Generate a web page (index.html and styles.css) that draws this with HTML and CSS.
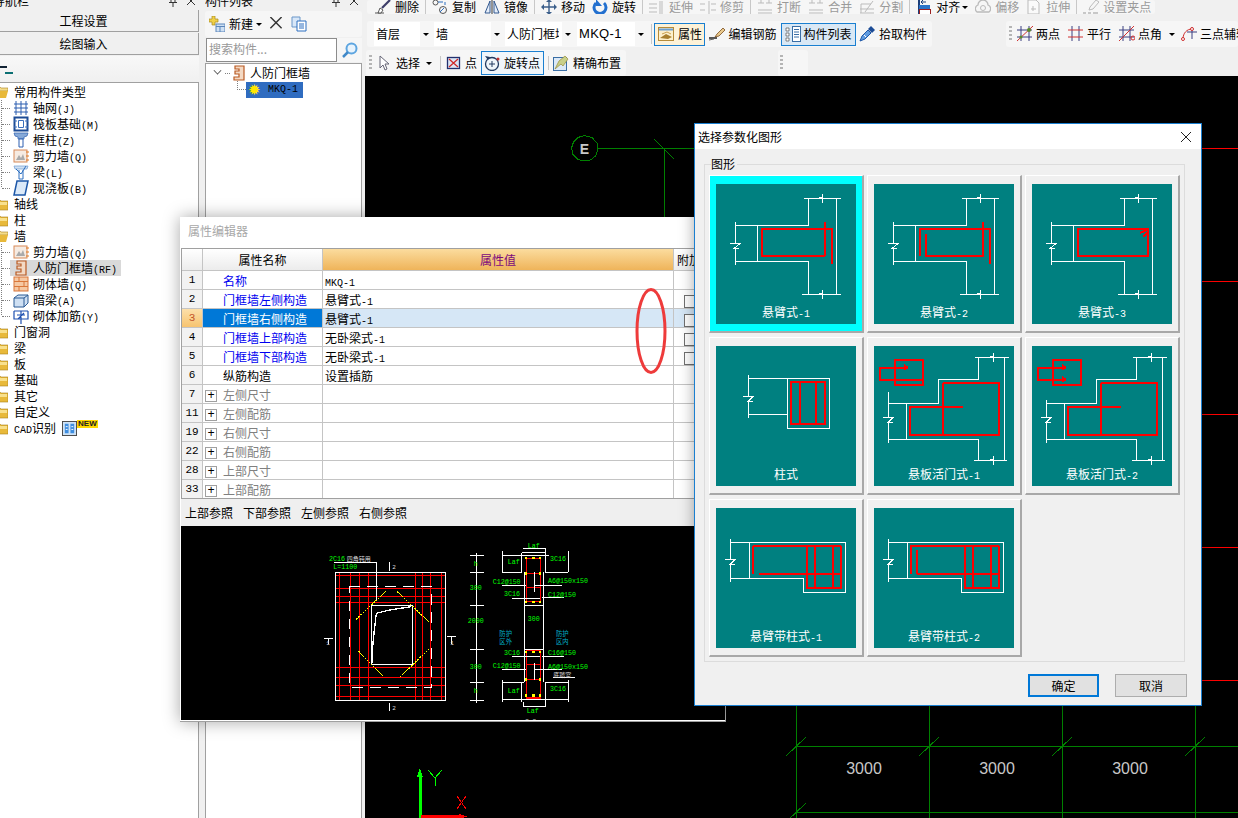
FILE: index.html
```html
<!DOCTYPE html>
<html lang="zh">
<head>
<meta charset="utf-8">
<title>属性编辑器</title>
<link rel="stylesheet" href="styles.css">
</head>
<body>
<svg class="defs" xmlns="http://www.w3.org/2000/svg">
  <symbol id="folder" viewBox="0 0 13 13"><path d="M0 2h5l1 1h7v9H0z" fill="#e8b93a" stroke="#a97f1c" stroke-width=".6"/><rect x="1" y="4" width="11" height="3" fill="#f8e08c"/></symbol>
  <symbol id="folderopen" viewBox="0 0 13 13"><path d="M0 1h5l1 1h7v3H3L0 12z" fill="#f4dc8a" stroke="#a97f1c" stroke-width=".6"/><path d="M3 5h10l-2 7H0z" fill="#e8b93a"/></symbol>
  <symbol id="pin" viewBox="0 0 10 10"><path d="M3 0v5M7 0v5M1 5.500h8M5 5v5" stroke="#333" fill="none"/></symbol>
  <symbol id="x" viewBox="0 0 10 10"><path d="M1 0l8 8M9 0l-8 8" stroke="#333" fill="none"/></symbol>
  <symbol id="grid" viewBox="0 0 16 16"><path d="M3 1v14M8 1v14M13 1v14M1 4h14M1 8h14M1 12h14" stroke="#2c5fb0" fill="none"/></symbol>
  <symbol id="raft" viewBox="0 0 16 16"><path d="M1.500 1.500h13v13h-13z" fill="none" stroke="#1d4c96" stroke-width="2"/><path d="M5.500 4.500h5v7h-5zM1 5h3M1 11h3M12 5h3M12 11h3" fill="none" stroke="#3a6fbb"/></symbol>
  <symbol id="col" viewBox="0 0 16 16"><path d="M1 1h14l-1 3-3 1v2H5V5L2 4z" fill="#86a9d8" stroke="#2c5fb0" stroke-width=".7"/><path d="M6 7h4v8H6z" fill="#fff" stroke="#2c5fb0"/></symbol>
  <symbol id="shear" viewBox="0 0 16 16"><rect x="1" y="2" width="13" height="12" fill="#f6ebe2" stroke="#d78a58"/><path d="M3 12l3-5 2 3 2-4 2 6z" fill="#aaa"/><path d="M13 4h3M13 8h3M13 12h3" stroke="#e07b22"/></symbol>
  <symbol id="beam" viewBox="0 0 16 16"><path d="M1 2h14l-1 3H2z" fill="#cfe0f3" stroke="#6f9bd0" stroke-width=".7"/><path d="M3 5l5 5 5-8M6 6v9h4V6" fill="none" stroke="#2c6fc0"/></symbol>
  <symbol id="slab" viewBox="0 0 16 16"><path d="M4 1h11l-3 14H1z" fill="#dbe9f8" stroke="#1d57a8" stroke-width="1.500"/></symbol>
  <symbol id="mkq" viewBox="0 0 16 16"><path d="M4 1h9v14H3v-3h5V9H4V6h4V4H4z" fill="#f3d9c4" stroke="#b95a23" stroke-width="1.200"/></symbol>
  <symbol id="brick" viewBox="0 0 16 16"><rect x="1" y="1" width="14" height="14" fill="#f5c8a3" stroke="#d9773a"/><path d="M1 5.500h14M1 10.500h14M6 1v4M11 5.500v5M6 10.500V15" stroke="#d9773a" fill="none"/></symbol>
  <symbol id="dbeam" viewBox="0 0 16 16"><path d="M1 6l4-3h10v8l-4 4H1z" fill="#cfe0f3" stroke="#2b5a94"/><path d="M1 6h10v9M11 6l4-3" fill="none" stroke="#2b5a94"/></symbol>
  <symbol id="rein" viewBox="0 0 16 16"><path d="M1 3h14M1 3v8h14V3M8 3v13M4 7h8M11 5l-6 6" fill="none" stroke="#1d4fb0" stroke-width="1.200"/></symbol>
  <symbol id="cad" viewBox="0 0 16 16"><rect x=".5" y=".5" width="15" height="15" fill="#cfe3f7" stroke="#444"/><path d="M3 3h4v10H3zM9 3h4v10H9z" fill="#3f8ee0"/><path d="M4 6h2M4 9h2M10 6h2M10 9h2" stroke="#fff"/></symbol>
  <symbol id="plusnew" viewBox="0 0 16 16"><path d="M3 0h3v3h3v3H6v3H3V6H0V3h3z" fill="#f0d048" stroke="#a88a20" stroke-width=".7"/><rect x="7" y="8" width="9" height="8" fill="#cfe0f3" stroke="#5b86bb"/><path d="M7 10.500h9M11 11v5" stroke="#5b86bb"/></symbol>
  <symbol id="copydoc" viewBox="0 0 16 16"><path d="M1 1h8v10H1z" fill="#d8e7f8" stroke="#6b97c9"/><path d="M6 5h9v10H6z" fill="#fff" stroke="#2d6fc0"/><path d="M8 8h5M8 10h5M8 12h5" stroke="#2d6fc0"/></symbol>
  <symbol id="search" viewBox="0 0 16 16"><circle cx="9.500" cy="6.500" r="5" fill="#e8f3fc" stroke="#5da5e0" stroke-width="2"/><path d="M6 10l-5 5" stroke="#4189c8" stroke-width="2.500"/></symbol>
  <symbol id="t-del" viewBox="0 0 16 16"><path d="M0 14h9" stroke="#555"/><path d="M7 9l8-8" stroke="#3d3d68" stroke-width="2.200"/><path d="M3 14l2-5 3 2-2 3z" fill="#fff" stroke="#333" stroke-width=".8"/></symbol>
  <symbol id="t-copy" viewBox="0 0 16 16"><circle cx="3.500" cy="3.500" r="2.500" fill="none" stroke="#555"/><circle cx="11" cy="11" r="3.500" fill="none" stroke="#555"/><path d="M6 3h5M13 3v3M8 13l4-4" stroke="#2d6fc0" fill="none"/></symbol>
  <symbol id="t-mir" viewBox="0 0 16 16"><path d="M6 2L1 14h5zM10 2l5 12h-5z" fill="#e5eefa" stroke="#33598f"/><path d="M8 0v16" stroke="#333"/></symbol>
  <symbol id="t-move" viewBox="0 0 16 16"><path d="M8 2v12M2 8h12" stroke="#3b5e8a" stroke-width="1.400"/><path d="M8 0l3 3H5zM8 16l3-3H5zM0 8l3-3v6zM16 8l-3-3v6z" fill="#3b5e8a"/></symbol>
  <symbol id="t-rot" viewBox="0 0 16 16"><path d="M4 4a6 6 0 1 0 8 0" fill="none" stroke="#2370cf" stroke-width="3"/><path d="M4 0v7h6z" fill="#2370cf"/></symbol>
  <symbol id="t-ext" viewBox="0 0 16 16"><path d="M0 5h8M0 9h8M0 13h8M11 2v13M13 2v13" stroke="#bbb" fill="none"/></symbol>
  <symbol id="t-trim" viewBox="0 0 16 16"><path d="M0 5h5M0 11h5M9 2v13M11 5h5M11 11h5" stroke="#bbb" fill="none"/></symbol>
  <symbol id="t-brk" viewBox="0 0 16 16"><path d="M1 4h6M9 4h6M1 11h14M1 14h14M4 1v3M12 1v3" stroke="#bbb" fill="none"/></symbol>
  <symbol id="t-split" viewBox="0 0 16 16"><path d="M1 14h14M1 10h14M2 5l10 0M2 14V5M14 2L6 13" stroke="#bbb" fill="none"/></symbol>
  <symbol id="t-align" viewBox="0 0 16 16"><path d="M3 0v16" stroke="#1d3f7a" stroke-width="2"/><rect x="3" y="6" width="11" height="4" fill="#2a73c8"/><rect x="3.500" y="10.500" width="11" height="5" fill="#fff" stroke="#9c2020"/><path d="M10 3H5M7 1L5 3l2 2" stroke="#1d3f7a" fill="none"/></symbol>
  <symbol id="t-off" viewBox="0 0 16 16"><path d="M2 13a4 4 0 0 1 1-7 5 5 0 0 1 10 0 4 4 0 0 1 1 7z" fill="none" stroke="#bbb" stroke-width="1.300"/><circle cx="8" cy="9" r="2.500" fill="none" stroke="#bbb"/></symbol>
  <symbol id="t-str" viewBox="0 0 16 16"><path d="M2 1h8l3 3v11H2z" fill="#fafafa" stroke="#bbb"/><path d="M7 7v5M5 10h5" stroke="#bbb"/></symbol>
  <symbol id="t-grip" viewBox="0 0 16 16"><path d="M0 14h3M5 14h3M10 14h5" stroke="#999"/><path d="M6 11l1-3 6-7 3 2-6 7z" fill="none" stroke="#bbb"/></symbol>
  <symbol id="t-attr" viewBox="0 0 16 16"><rect x=".5" y="1.500" width="15" height="13" fill="#fdf0cc" stroke="#b58b3a"/><path d="M1 3.500h14" stroke="#6fa0d0" stroke-width="2"/><path d="M2 12l6-4 6 3-4 2z" fill="#a88030"/><path d="M4 8l5-2 4 2" stroke="#c9a050" fill="none"/></symbol>
  <symbol id="t-edit" viewBox="0 0 16 16"><path d="M0 12h8" stroke="#222" stroke-width="1.500"/><path d="M6 11l2-3 6-6 2 2-6 6z" fill="#e9c98c" stroke="#7a4d20" stroke-width=".8"/><path d="M0 14l5-1" stroke="#666"/></symbol>
  <symbol id="t-list" viewBox="0 0 16 16"><rect x="7.500" y=".5" width="8" height="15" fill="#fff" stroke="#3a6ea5"/><path d="M9 3.500h5M9 6h5M9 8.500h5M9 11h5" stroke="#3a6ea5"/><path d="M1 2h3v3H1zM1 7h3v3H1zM1 12h3v3H1z" fill="#fff" stroke="#555" stroke-width=".7"/></symbol>
  <symbol id="t-pick" viewBox="0 0 16 16"><path d="M1 15l2-5 6-6 3 3-6 6z" fill="#5f9adf" stroke="#1d57a8"/><path d="M9 3l3-3 4 4-3 3z" fill="#1d4c96"/><path d="M5 9l2 2" stroke="#fff"/></symbol>
  <symbol id="t-two" viewBox="0 0 16 16"><path d="M4 0v15M12 0v15M0 4h15M0 11h15" stroke="#3a3f80" fill="none"/><path d="M0 15L16 0" stroke="#d03030"/><circle cx="12" cy="4" r="2" fill="#5b8a28"/><circle cx="4" cy="11" r="1.500" fill="#5b8a28"/></symbol>
  <symbol id="t-par" viewBox="0 0 16 16"><path d="M4 0v15M11 0v15" stroke="#3a3f80" fill="none"/><path d="M0 4h15M0 11h15" stroke="#d03030" fill="none"/></symbol>
  <symbol id="t-ang" viewBox="0 0 16 16"><path d="M4 0v15M11 0v15M0 4h15M0 11h15" stroke="#3a3f80" fill="none"/><path d="M0 15L15 0" stroke="#d03030"/><circle cx="14" cy="12" r="2" fill="none" stroke="#d03030"/></symbol>
  <symbol id="t-three" viewBox="0 0 16 16"><path d="M11 1v12M6 6h10" stroke="#3a3f80" fill="none"/><path d="M2 13C2 7 6 3 11 3" fill="none" stroke="#d03030"/><circle cx="2" cy="13" r="1.500" fill="#fff" stroke="#d03030"/><circle cx="11" cy="3" r="1.500" fill="#fff" stroke="#d03030"/></symbol>
  <symbol id="t-sel" viewBox="0 0 16 16"><path d="M4 1v12l3-3 2 5 2-1-2-5h4z" fill="#fff" stroke="#667"/></symbol>
  <symbol id="t-pt" viewBox="0 0 16 16"><rect x="1.500" y="2.500" width="12" height="11" fill="#dbe6f5" stroke="#22306f" stroke-width="1.300"/><path d="M3 4l9 8M12 4l-9 8" stroke="#d02828" stroke-width="1.300"/></symbol>
  <symbol id="t-rpt" viewBox="0 0 16 16"><circle cx="8" cy="9" r="6.500" fill="none" stroke="#223a60" stroke-width="1.300"/><path d="M5 9h6M8 6v6" stroke="#223a60"/><path d="M1 1l3 4 2-3z" fill="#223a60"/><circle cx="14" cy="4" r="1.500" fill="#c03030"/></symbol>
  <symbol id="t-prec" viewBox="0 0 16 16"><rect x=".5" y="2.500" width="13" height="13" fill="#dce9f7" stroke="#3a6ea5"/><path d="M2 14l6-5 2 2 5-7-3-3-6 5z" fill="#c9d08a" stroke="#9a8d38" stroke-width=".7"/></symbol>
  <symbol id="tee" viewBox="0 0 140 140"><path d="M19.500 38v21M19.500 64v17M19.500 41.500h73v-27M88 14.500h37M120.500 14.500v96M86 110.500h39M92.500 110.500v-33h-73M41.500 41.500v36M14 59.500h10l-6 5h5M106.500 10v9M102 14.500l5-2M106.500 106v9M102 110.500l5-2" fill="none" stroke="#fff"/></symbol>
  <symbol id="slabt" viewBox="0 0 140 140"><path d="M101 11.500h34M130.500 11.500v103M104.500 11.500v22h-40v24h-50M14.500 93.500h90v21M100 114.500h33M32.500 57.500v36M9 71.500h10l-5 5h5M119.500 7v9M115 11.500l5-2M119.500 110v9M115 114.500l5-2" fill="none" stroke="#fff"/><path d="M69 37h56v52H36V61h53M69 37v52" fill="none" stroke="#f00" stroke-width="2"/></symbol>
  <symbol id="cant" viewBox="0 0 140 140"><path d="M14.500 31v20M14.500 56v18M14.500 34.500h115v50h-42v-14h-73M33.500 34.500v36M9 51.500h10l-5 5h5" fill="none" stroke="#fff"/><path d="M91 38v42h34V38M99 38v42M117 38v42M43 66h82" fill="none" stroke="#f00" stroke-width="2"/></symbol>
</svg>

<div class="app">
  <aside class="nav">
    <div class="cliptitle"><span class="cliptext">模块导航栏</span><span class="titleicons"><svg class="mini"><use href="#pin"/></svg><svg class="mini"><use href="#x"/></svg></span></div>
    <button class="navbtn">工程设置</button>
    <button class="navbtn">绘图输入</button>
    <div class="navbar"><span class="teal-a"></span><span class="teal-b"></span></div>
    <ul class="tree">
      <li class="folder"><svg class="fi"><use href="#folderopen"/></svg>常用构件类型</li>
      <li class="group"><ul>
        <li class="leaf"><span class="dots"></span><span class="node"><svg class="ic"><use href="#grid"/></svg><span>轴网<i>(J)</i></span></span></li>
        <li class="leaf"><span class="dots"></span><span class="node"><svg class="ic"><use href="#raft"/></svg><span>筏板基础<i>(M)</i></span></span></li>
        <li class="leaf"><span class="dots"></span><span class="node"><svg class="ic"><use href="#col"/></svg><span>框柱<i>(Z)</i></span></span></li>
        <li class="leaf"><span class="dots"></span><span class="node"><svg class="ic"><use href="#shear"/></svg><span>剪力墙<i>(Q)</i></span></span></li>
        <li class="leaf"><span class="dots"></span><span class="node"><svg class="ic"><use href="#beam"/></svg><span>梁<i>(L)</i></span></span></li>
        <li class="leaf"><span class="dots"></span><span class="node"><svg class="ic"><use href="#slab"/></svg><span>现浇板<i>(B)</i></span></span></li>
      </ul></li>
      <li class="folder"><svg class="fi"><use href="#folder"/></svg>轴线</li>
      <li class="folder"><svg class="fi"><use href="#folder"/></svg>柱</li>
      <li class="folder"><svg class="fi"><use href="#folderopen"/></svg>墙</li>
      <li class="group"><ul>
        <li class="leaf"><span class="dots"></span><span class="node"><svg class="ic"><use href="#shear"/></svg><span>剪力墙<i>(Q)</i></span></span></li>
        <li class="leaf"><span class="dots"></span><span class="node cur"><svg class="ic"><use href="#mkq"/></svg><span>人防门框墙<i>(RF)</i></span></span></li>
        <li class="leaf"><span class="dots"></span><span class="node"><svg class="ic"><use href="#brick"/></svg><span>砌体墙<i>(Q)</i></span></span></li>
        <li class="leaf"><span class="dots"></span><span class="node"><svg class="ic"><use href="#dbeam"/></svg><span>暗梁<i>(A)</i></span></span></li>
        <li class="leaf"><span class="dots"></span><span class="node"><svg class="ic"><use href="#rein"/></svg><span>砌体加筋<i>(Y)</i></span></span></li>
      </ul></li>
      <li class="folder"><svg class="fi"><use href="#folder"/></svg>门窗洞</li>
      <li class="folder"><svg class="fi"><use href="#folder"/></svg>梁</li>
      <li class="folder"><svg class="fi"><use href="#folder"/></svg>板</li>
      <li class="folder"><svg class="fi"><use href="#folder"/></svg>基础</li>
      <li class="folder"><svg class="fi"><use href="#folder"/></svg>其它</li>
      <li class="folder"><svg class="fi"><use href="#folder"/></svg>自定义</li>
      <li class="folder"><svg class="fi"><use href="#folder"/></svg><span><i>CAD</i>识别</span><svg class="ic cadic"><use href="#cad"/></svg><b class="newtag">NEW</b></li>
    </ul>
  </aside>

  <section class="list">
    <div class="cliptitle list-title"><span class="cliptext">构件列表</span><span class="titleicons"><svg class="mini"><use href="#pin"/></svg><svg class="mini"><use href="#x"/></svg></span></div>
    <div class="listbar">
      <svg class="ic"><use href="#plusnew"/></svg><span class="newlbl">新建</span><span class="caret"></span>
      <svg class="bigx"><use href="#x"/></svg>
      <svg class="ic"><use href="#copydoc"/></svg>
    </div>
    <div class="searchrow"><span class="searchbox">搜索构件...</span><span class="searchbtn"><svg class="ic"><use href="#search"/></svg></span></div>
    <div class="listtree">
      <div class="ltroot"><span class="chev"></span><span class="ltdots"></span><svg class="ic ltic"><use href="#mkq"/></svg>人防门框墙</div>
      <div class="ltchild"><span class="ltelbow"></span><span class="ltsel"><span class="gear">✹</span><i>MKQ-1</i></span></div>
    </div>
  </section>

  <main class="work">
    <div class="bars">
      <div class="tbrow row1">
        <div class="tb tb1">
          <span class="ti"><svg class="ic"><use href="#t-del"/></svg>删除</span><span class="sep"></span>
          <span class="ti"><svg class="ic"><use href="#t-copy"/></svg>复制</span>
          <span class="ti mirror"><svg class="ic"><use href="#t-mir"/></svg>镜像</span><span class="sep"></span>
          <span class="ti"><svg class="ic"><use href="#t-move"/></svg>移动</span>
          <span class="ti"><svg class="ic"><use href="#t-rot"/></svg>旋转</span><span class="sep"></span>
          <span class="ti off"><svg class="ic"><use href="#t-ext"/></svg>延伸</span>
          <span class="ti off"><svg class="ic"><use href="#t-trim"/></svg>修剪</span><span class="sep"></span>
          <span class="ti off"><svg class="ic"><use href="#t-brk"/></svg>打断</span>
          <span class="ti off"><svg class="ic"><use href="#t-brk"/></svg>合并</span>
          <span class="ti off"><svg class="ic"><use href="#t-split"/></svg>分割</span><span class="sep"></span>
          <span class="ti"><svg class="ic"><use href="#t-align"/></svg>对齐<span class="caret inl"></span></span>
          <span class="ti off"><svg class="ic"><use href="#t-off"/></svg>偏移</span>
          <span class="ti off"><svg class="ic"><use href="#t-str"/></svg>拉伸</span><span class="sep"></span>
          <span class="ti off"><svg class="ic"><use href="#t-grip"/></svg>设置夹点</span>
        </div>
      </div>
      <div class="tbrow row2">
        <div class="tb tb2">
          <span class="combo w58"><span class="ctext">首层</span><span class="cbtn"><span class="caret"></span></span></span>
          <span class="combo w69"><span class="ctext">墙</span><span class="cbtn"><span class="caret"></span></span></span>
          <span class="combo w69 g3"><span class="ctext">人防门框墙</span><span class="cbtn"><span class="caret"></span></span></span>
          <span class="combo w70 g3"><span class="ctext latin">MKQ-1</span><span class="cbtn"><span class="caret"></span></span></span>
          <span class="sep s2"></span>
          <span class="tbtn amber"><svg class="ic"><use href="#t-attr"/></svg>属性</span>
          <span class="ti t2"><svg class="ic"><use href="#t-edit"/></svg>编辑钢筋</span>
          <span class="tbtn blue"><svg class="ic"><use href="#t-list"/></svg>构件列表</span>
          <span class="ti t2"><svg class="ic"><use href="#t-pick"/></svg>拾取构件</span>
        </div>
        <div class="tb tb3">
          <span class="grip"></span>
          <span class="ti t3"><svg class="ic"><use href="#t-two"/></svg>两点</span>
          <span class="ti t3"><svg class="ic"><use href="#t-par"/></svg>平行</span>
          <span class="ti t3"><svg class="ic"><use href="#t-ang"/></svg>点角<span class="caret car3"></span></span>
          <span class="ti t3"><svg class="ic"><use href="#t-three"/></svg>三点辅轴</span>
        </div>
      </div>
      <div class="tbrow row3">
        <div class="tb tb4">
          <span class="grip"></span>
          <span class="ti t4a"><svg class="ic"><use href="#t-sel"/></svg>选择<span class="caret car4"></span></span><span class="sep s3"></span>
          <span class="ti t4b"><svg class="ic"><use href="#t-pt"/></svg>点</span>
          <span class="tbtn rot"><svg class="ic"><use href="#t-rpt"/></svg>旋转点</span><span class="sep s4"></span>
          <span class="ti t4c"><svg class="ic"><use href="#t-prec"/></svg>精确布置</span>
        </div>
        <div class="tb tb5"><span class="grip"></span></div>
      </div>
    </div>
    <svg class="canvas" viewBox="365 76 873 742" xmlns="http://www.w3.org/2000/svg">
      <g fill="none" stroke="#008000">
        <path d="M598 148.500h100M664.500 148v75M654 139l20 20"/>
        <polygon points="584.500,135.500 592,137.500 597,143 598,149 596,155.500 590.500,160 584,161 578,159.500 573,154.500 571.500,148 573.500,142 578,137.500"/>
        <path d="M796.500 700v118M929.500 700v118M1062.500 700v118M1195.500 700v118M796 746.500h442M796 812.500h442"/>
        <path d="M786 756l20-19M919 756l20-19M1052 756l20-19M1185 756l20-19M786 822l20-19"/>
      </g>
      <path d="M1190 148.500h48M1190 281.500h48M1190 414.500h48M1190 547.500h48M1190 680.500h48" stroke="#f00"/>
      <text class="gridlabel e" x="584.500" y="154" text-anchor="middle">E</text>
      <text class="gridlabel" x="864" y="774" text-anchor="middle">3000</text>
      <text class="gridlabel" x="997" y="774" text-anchor="middle">3000</text>
      <text class="gridlabel" x="1130" y="774" text-anchor="middle">3000</text>
      <path d="M420 818v-42" stroke="#0f0" stroke-width="3"/><path d="M420 768l3 9h-6z" fill="#0f0"/>
      <path d="M428 768l7 8 7-8M435 776v8" stroke="#0f0" fill="none" transform="translate(0 2)"/>
      <path d="M421 816.500h42" stroke="#f00" stroke-width="3"/><path d="M468 817l-9-3v4z" fill="#f00"/>
      <path d="M457 796l9 13M466 796l-9 13" stroke="#f00"/>
    </svg>
  </main>
</div>

<div class="prop">
  <div class="proptitle">属性编辑器</div>
  <div class="gridwrap">
    <table class="ptable">
      <colgroup><col class="c1"><col class="c2"><col class="c3"><col class="c4"></colgroup>
      <thead><tr><th></th><th>属性名称</th><th class="hval">属性值</th><th class="hatt">附加</th></tr></thead>
      <tbody>
        <tr><td class="idx">1</td><td class="nm link">名称</td><td class="val"><i>MKQ-1</i></td><td></td></tr>
        <tr><td class="idx">2</td><td class="nm link">门框墙左侧构造</td><td class="val">悬臂式<i>-1</i></td><td><span class="chk"></span></td></tr>
        <tr class="cur"><td class="idx">3</td><td class="nm">门框墙右侧构造</td><td class="val">悬臂式<i>-1</i></td><td><span class="chk"></span></td></tr>
        <tr><td class="idx">4</td><td class="nm link">门框墙上部构造</td><td class="val">无卧梁式<i>-1</i></td><td><span class="chk"></span></td></tr>
        <tr><td class="idx">5</td><td class="nm link">门框墙下部构造</td><td class="val">无卧梁式<i>-1</i></td><td><span class="chk"></span></td></tr>
        <tr><td class="idx">6</td><td class="nm">纵筋构造</td><td class="val">设置插筋</td><td></td></tr>
        <tr><td class="idx">7</td><td class="gp"><span class="plus">+</span>左侧尺寸</td><td></td><td></td></tr>
        <tr><td class="idx">11</td><td class="gp"><span class="plus">+</span>左侧配筋</td><td></td><td></td></tr>
        <tr><td class="idx">19</td><td class="gp"><span class="plus">+</span>右侧尺寸</td><td></td><td></td></tr>
        <tr><td class="idx">22</td><td class="gp"><span class="plus">+</span>右侧配筋</td><td></td><td></td></tr>
        <tr><td class="idx">28</td><td class="gp"><span class="plus">+</span>上部尺寸</td><td></td><td></td></tr>
        <tr><td class="idx">33</td><td class="gp"><span class="plus">+</span>上部配筋</td><td></td><td></td></tr>
      </tbody>
    </table>
    <svg class="mark" viewBox="0 0 34 90"><ellipse cx="17" cy="45" rx="14" ry="41.500" fill="none" stroke="#ee3b3b" stroke-width="3"/></svg>
  </div>
  <div class="tabs"><span>上部参照</span><span>下部参照</span><span>左侧参照</span><span>右侧参照</span></div>
  <svg class="preview" viewBox="-357 -12 1632 582" xmlns="http://www.w3.org/2000/svg">
    <g fill="none" stroke="#f00" stroke-width="3">
      <path d="M107 135h330M107 175h330M107 199h330M107 217h330M107 412h330M107 441h330M107 465h330M107 500h330"/>
      <path d="M118 127v384M151 127v384M177 127v384M205 127v384M347 127v384M367 127v384M391 127v384M423 127v384M435 127v384"/>
      <path d="M678 80v140M722 80v140M678 86h44M678 130h44M678 172h44M678 214h44M678 362v142M722 362v142M678 362h44M678 404h44M678 448h44"/>
      <path d="M678 504h44" stroke-width="5"/>
    </g>
    <g fill="none" stroke="#fff" stroke-width="3">
      <rect x="107" y="127" width="330" height="384"/>
      <rect x="147" y="170" width="248" height="302" stroke-dasharray="32 22"/>
      <rect x="214" y="226" width="123" height="177"/>
      <path d="M217 400v-40l6-60 6-50 40-10 64-10" stroke-width="4"/>
      <path d="M103 97h127v113M267 97v25M267 520v23M72 326h26M441 320h27M85 326v16M455 320v22" />
      <path d="M529 68v450M510 76h43M510 127h43M510 226h43M510 358h43M510 457h43M510 511h43"/>
      <path d="M673 127v330M730 127v330M673 226h57M673 358h57"/>
      <path d="M607 64v63M805 64v63M607 76h140M607 127h58M735 127h70M665 68h72v59M665 68v59M670 55h67v13"/>
      <path d="M607 451v66M805 451v66M607 508h197M607 457h66M735 457h70M665 457v60M737 457v72H670v-12"/>
      <path d="M606 166h72M703 166h82M636 205h84M725 202h67M636 379h84M725 379h67M606 418h72M703 418h82M703 127v60M703 400v50M760 442h65"/>
    </g>
    <g stroke="#ff0" stroke-width="3" stroke-dasharray="6 3" fill="none">
      <path d="M168 268l90-84M291 184l96 92M175 363l73 74M300 441l87-84"/>
    </g>
    <g fill="#ff0"><rect x="675" y="80" width="7" height="7"/><rect x="697" y="80" width="7" height="7"/><rect x="716" y="80" width="7" height="7"/><rect x="675" y="127" width="7" height="7"/><rect x="716" y="127" width="7" height="7"/><rect x="675" y="212" width="7" height="7"/><rect x="697" y="212" width="7" height="7"/><rect x="716" y="212" width="7" height="7"/><rect x="675" y="362" width="7" height="7"/><rect x="697" y="362" width="7" height="7"/><rect x="716" y="362" width="7" height="7"/><rect x="675" y="445" width="7" height="7"/><rect x="716" y="445" width="7" height="7"/><rect x="675" y="493" width="7" height="7"/><rect x="697" y="493" width="7" height="7"/><rect x="716" y="493" width="7" height="7"/></g>
    <g class="pv">
      <text x="87" y="93">2C16</text><text class="pvw" x="140" y="93">四角钝用</text>
      <text x="100" y="116">L=1100</text>
      <text x="683" y="53">Laf</text><text x="623" y="102">Laf</text><text x="750" y="93">3C16</text>
      <text x="527" y="107" text-anchor="middle">h</text><text x="527" y="179" text-anchor="middle">300</text><text x="527" y="278" text-anchor="middle">2000</text><text x="527" y="418" text-anchor="middle">300</text><text x="527" y="490" text-anchor="middle">h</text>
      <text x="578" y="161">C12@150</text><text x="744" y="158">A6@150x150</text><text x="612" y="197">3C16</text><text x="744" y="200">C12@150</text>
      <text x="683" y="273">300</text>
      <text x="612" y="374">3C16</text><text x="744" y="374">C16@150</text><text x="578" y="413">C12@150</text><text x="744" y="416">A6@150x150</text>
      <text x="623" y="489">Laf</text><text x="750" y="482">3C16</text><text x="680" y="548">Laf</text>
      <text class="pvw" x="760" y="440">底踏室</text>
      <text class="pvc" x="598" y="318">防护</text><text class="pvc" x="598" y="342">区外</text><text class="pvc" x="768" y="318">防护</text><text class="pvc" x="768" y="342">区内</text>
      <text class="pvm" x="277" y="116">2</text><text class="pvm" x="277" y="540">2</text><text class="pvm" x="79" y="344">1</text><text class="pvm" x="451" y="344">1</text>
      <text class="pvm" x="676" y="580">2-2</text>
    </g>
  </svg>
</div>

<div class="dlg">
  <div class="dlgtitle"><span>选择参数化图形</span><svg class="dlgx" viewBox="0 0 10 10"><path d="M0 0l10 10M10 0L0 10" stroke="#222" fill="none"/></svg></div>
  <div class="dlgbody">
    <div class="group-box">
      <div class="legend">图形</div>
      <div class="tiles">
        <div class="tile sel"><svg class="pic" viewBox="0 0 140 140"><use href="#tee"/><path d="M109 72H46V45h70v35M109 38v34" fill="none" stroke="#f00" stroke-width="2"/><text class="cap" x="70" y="133" text-anchor="middle">悬臂式<tspan class="capm">-1</tspan></text></svg></div>
        <div class="tile"><svg class="pic" viewBox="0 0 140 140"><use href="#tee"/><path d="M46 72V45h70v35M109 38v34H52V50" fill="none" stroke="#f00" stroke-width="2"/><text class="cap" x="70" y="133" text-anchor="middle">悬臂式<tspan class="capm">-2</tspan></text></svg></div>
        <div class="tile"><svg class="pic" viewBox="0 0 140 140"><use href="#tee"/><path d="M46 45h70v27H46zM108 49l7-3M111 53l5-5" fill="none" stroke="#f00" stroke-width="2"/><text class="cap" x="70" y="133" text-anchor="middle">悬臂式<tspan class="capm">-3</tspan></text></svg></div>
        <div class="tile"><svg class="pic" viewBox="0 0 140 140"><path d="M32.500 29v21M32.500 55v17M32.500 32.500h81v50h-42v-50M32.500 68.500h39M27 50.500h10l-5 5h5" fill="none" stroke="#fff"/><path d="M75 36h34v42H75zM84 36v42M100 36v42" fill="none" stroke="#f00" stroke-width="2"/><text class="cap" x="70" y="133" text-anchor="middle">柱式</text></svg></div>
        <div class="tile"><svg class="pic" viewBox="0 0 140 140"><use href="#slabt"/><path d="M21 14h28v25H21zM34 22H6v12h42M34 22l-3-2v4" fill="none" stroke="#f00" stroke-width="2"/><path d="M14.500 46v25M14.500 76v21" stroke="#fff" fill="none"/><text class="cap" x="70" y="133" text-anchor="middle">悬板活门式<tspan class="capm">-1</tspan></text></svg></div>
        <div class="tile"><svg class="pic" viewBox="0 0 140 140"><use href="#slabt"/><path d="M14.500 54v17M14.500 76v21" stroke="#fff" fill="none"/><path d="M21 14h28v25H21zM34 22H6v12h28M34 22l-3-2v4M34 34l-3-2v4" fill="none" stroke="#f00" stroke-width="2"/><text class="cap" x="70" y="133" text-anchor="middle">悬板活门式<tspan class="capm">-2</tspan></text></svg></div>
        <div class="tile"><svg class="pic" viewBox="0 0 140 140"><use href="#cant"/><path d="M37 38h88M37 38v28" fill="none" stroke="#f00" stroke-width="2"/><text class="cap" x="70" y="133" text-anchor="middle">悬臂带柱式<tspan class="capm">-1</tspan></text></svg></div>
        <div class="tile"><svg class="pic" viewBox="0 0 140 140"><use href="#cant"/><path d="M37 66V38h88M43 42v24" fill="none" stroke="#f00" stroke-width="2"/><text class="cap" x="70" y="133" text-anchor="middle">悬臂带柱式<tspan class="capm">-2</tspan></text></svg></div>
      </div>
    </div>
    <div class="dlgfoot"><button class="dbtn primary">确定</button><button class="dbtn">取消</button></div>
  </div>
</div>
</body>
</html>
```

FILE: styles.css
```css
* { box-sizing: border-box; }
html, body { margin: 0; padding: 0; }
body {
  position: relative;
  width: 1238px;
  height: 818px;
  overflow: hidden;
  background: #f0f0f0;
  font: 12px/16px "Noto Sans CJK SC", "Liberation Sans", sans-serif;
  color: #000;
}
ul { list-style: none; margin: 0; padding: 0; }
i { font: 10px/10px "Liberation Mono", monospace; font-style: normal; }
.defs { display: none; }
.app { display: flex; height: 818px; }

/* Left navigator */
.nav { width: 230px; margin-left: -31px; display: flex; flex-direction: column; flex: none; }
.cliptitle { height: 8px; overflow: hidden; display: flex; justify-content: space-between; flex: none; }
.cliptext { display: block; margin-top: -5px; line-height: 12px; }
.titleicons { display: flex; gap: 8px; padding-right: 3px; margin-top: -3px; }
.mini { width: 10px; height: 10px; }
.navbtn {
  height: 22px; flex: none; padding: 0; margin-bottom: 1px;
  border: 0; border-right: 1px solid #a0a0a0; border-bottom: 1px solid #a0a0a0;
  background: #f0f0f0; font: inherit; line-height: 20px;
}
.navbtn:first-of-type { margin-top: 2px; }
.navbar { height: 26px; flex: none; padding: 10px 0 0 31px; background: linear-gradient(#f8f8f8, #f0f0f0); }
.teal-a, .teal-b { display: block; background: #0b6f73; height: 2px; }
.teal-a { width: 7px; background: #123; }
.teal-b { width: 8px; margin: 4px 0 0 5px; }
.tree {
  flex: 1; background: #fff; border-top: 1px solid #a0a0a0; border-right: 1px solid #a0a0a0;
  padding-top: 1px; overflow: hidden;
}
.folder { height: 16px; padding-left: 26px; display: flex; align-items: center; white-space: nowrap; }
.fi { width: 13px; height: 13px; margin-right: 6px; flex: none; }
.leaf {
  height: 16px; display: flex; margin-left: 32px;
  background: repeating-linear-gradient(#808080 0 1px, transparent 1px 2px) 0 0 / 1px 100% no-repeat;
}
.leaf:last-child { background-size: 1px 8px; }
.dots { width: 8px; height: 9px; margin-left: 1px; border-bottom: 1px dotted #808080; flex: none; }
.node { display: flex; align-items: center; gap: 4px; padding: 0 4px 0 3px; white-space: nowrap; }
.node.cur { background: #d9d9d9; }
.ic { width: 16px; height: 16px; flex: none; }
.cadic { width: 15px; height: 15px; margin-left: 6px; }
.newtag {
  align-self: flex-start; margin-top: 0; background: #ffd800; color: #222;
  font: 700 8px/8px "Liberation Sans", sans-serif; padding: 0 1px; height: 8px;
}

/* Component list */
.list { width: 157px; margin-left: 6px; flex: none; display: flex; flex-direction: column; }
.listbar {
  height: 26px; margin-top: 3px; padding: 0 0 0 4px; display: flex; align-items: center;
  background: #f6f6f6; border-radius: 3px; flex: none;
}
.newlbl { margin-left: 4px; }
.caret { display: inline-block; flex: none; border: 3px solid transparent; border-top: 3px solid #000; border-bottom: 0; }
.listbar .caret { margin-left: 3px; }
.bigx { width: 14px; height: 14px; margin: 0 8px 0 7px; }
.searchrow { display: flex; height: 24px; margin-top: 1px; flex: none; padding-left: 1px; }
.searchbox {
  width: 131px; height: 24px; background: #fff; border: 1px solid #8c8c8c; color: #999;
  padding-left: 2px; line-height: 20px;
}
.searchbtn { width: 25px; display: flex; align-items: center; justify-content: center; background: #f6f6f6; }
.listtree { flex: 1; margin-top: 1px; background: #fff; border: 1px solid #a0a0a0; border-bottom: 0; padding-top: 1px; }
.ltroot { height: 16px; display: flex; align-items: center; padding-left: 8px; }
.chev {
  width: 7px; height: 7px; border-right: 1.500px solid #444; border-bottom: 1.500px solid #444;
  transform: rotate(45deg) scale(.8); margin: -5px 0 0 0; flex: none;
}
.ltdots { width: 5px; margin-left: 4px; border-bottom: 1px dotted #808080; flex: none; }
.ltic { margin: 0 3px 0 1px; }
.ltchild { display: flex; height: 16px; margin-top: 1px; padding-left: 31px; }
.ltelbow { width: 9px; height: 9px; margin-top: -1px; border-left: 1px dotted #808080; border-bottom: 1px dotted #808080; flex: none; }
.ltsel { width: 57px; height: 16px; background: #2f6cc0; display: flex; align-items: center; padding-left: 2px; }
.gear { width: 20px; color: #ffe600; font: 15px/16px "DejaVu Sans", sans-serif; flex: none; }

/* Toolbars */
.work { width: 873px; margin-left: 3px; flex: none; display: flex; flex-direction: column; }
.bars { height: 76px; flex: none; }
.tbrow { display: flex; }
.tb { display: flex; align-items: center; background: #f6f6f6; border-radius: 3px; white-space: nowrap; flex: none; }
.row1 { height: 14px; padding-left: 2px; }
.tb1 { width: 788px; height: 14px; padding-left: 4.500px; overflow: hidden; }
.ti { display: flex; align-items: center; gap: 4px; padding: 0 3.500px; flex: none; }
.ti.off { color: #9a9a9a; }
.mirror { padding-left: 4.500px; }
.sep { width: 6px; height: 14px; flex: none; background: linear-gradient(#c8c8c8, #c8c8c8) center / 1px 100% no-repeat; }
.inl { margin-left: -2px; }
.row2 { height: 26px; margin-top: 7px; padding-left: 2px; }
.tb2 { width: 565px; height: 26px; padding-left: 7px; }
.combo { display: flex; height: 24px; background: #fff; flex: none; margin-right: 2px; }
.combo.g3 { margin-right: 3px; }
.combo:nth-child(4) { margin-right: 0; }
.w58 { width: 58px; } .w69 { width: 69px; } .w70 { width: 70px; }
.ctext { flex: 1; min-width: 0; overflow: hidden; padding: 4px 0 0 2px; margin-right: 3px; }
.latin { font: 13px/16px "Liberation Sans", sans-serif; letter-spacing: .3px; }
.cbtn { width: 12px; background: #f6f6f6; display: flex; align-items: center; justify-content: center; flex: none; }
.s2 { margin: 0 0 0 1px; width: 6px; height: 20px; }
.tbtn { display: flex; align-items: center; gap: 3px; height: 23px; border: 1px solid #1a7fd0; flex: none; padding-left: 3px; }
.amber { width: 51px; background: #fdf2d8; gap: 4px; }
.t2 { padding: 0 3.500px; gap: 4px; }
.blue { width: 75px; background: #d9e8f5; margin-left: .5px; gap: 3px; }
.tb3 { width: 232px; height: 26px; margin-left: 74px; padding-left: 3px; overflow: hidden; }
.grip {
  width: 3px; height: 16px; flex: none;
  background: repeating-linear-gradient(#b5b5b5 0 2px, transparent 2px 4px);
}
.t3 { padding: 0 3px 0 5px; gap: 3px; }
.car3 { margin-left: 4px; margin-right: -2px; }
.row3 { height: 26px; margin-top: 3px; padding-left: 1px; }
.tb4 { width: 260px; height: 26px; padding-left: 3px; }
.t4a { margin-left: 4px; padding: 0; gap: 4px; }
.car4 { margin-left: 2px; }
.s3 { margin-left: 5px; }
.t4b { padding: 0 0 0 3px; gap: 3px; }
.rot { width: 63px; height: 24px; margin-left: 4px; padding-left: 2px; gap: 4px; background: #f0f6fb; }
.s4 { margin-left: 1px; }
.t4c { padding: 0 0 0 2px; gap: 4px; }
.tb5 { width: 30px; height: 26px; margin-left: 152px; padding-left: 2px; }

/* Drawing canvas */
.canvas { width: 873px; height: 742px; display: block; flex: none; background: #000; shape-rendering: crispEdges; }
.gridlabel { fill: #c8c8c8; font: 16px "Liberation Sans", sans-serif; shape-rendering: auto; }
.gridlabel.e { font: 700 14px "Liberation Sans", sans-serif; }

/* Property editor window */
.prop {
  position: absolute; left: 180px; top: 217px; width: 546px; height: 505px; padding-left: 1px;
  background: #fff; display: flex; flex-direction: column;
  border-right: 1px solid #a0a0a0; border-bottom: 1px solid #a0a0a0;
  box-shadow: 0 0 16px rgba(0, 0, 0, .35);
}
.proptitle { height: 31px; flex: none; padding: 6px 0 0 7px; color: #a8a8a8; }
.gridwrap { height: 251px; flex: none; position: relative; overflow: hidden; border: solid #a0a0a0; border-width: 1px 0 1px 1px; }
.ptable { width: 544px; table-layout: fixed; border-collapse: separate; border-spacing: 0; }
.c1 { width: 21px; } .c2 { width: 120px; } .c3 { width: 351px; } .c4 { width: 52px; }
.ptable th, .ptable td {
  padding: 2px 0 0; border-right: 1px solid #c4c4c4; border-bottom: 1px solid #c4c4c4;
  font-weight: 400; line-height: 16px; height: 19px; overflow: hidden; white-space: nowrap;
}
.ptable th { height: 22px; padding-top: 0; line-height: 21px; background: linear-gradient(#fff, #ececec); }
.ptable .hval { background: linear-gradient(#fbdc9e, #efb45a); color: #7d0a7d; }
.ptable .hatt { text-align: left; padding-left: 3px; }
.ptable td.idx { text-align: center; padding-top: 0; background: #f2f2f2; font: 11px/18px "Liberation Mono", monospace; }
.ptable td.nm { padding-left: 20px; }
.ptable td.val { padding-left: 2px; }
.link { color: #0000f0; }
.ptable td.gp { color: #808080; padding-left: 2px; }
.plus {
  display: inline-block; width: 12px; height: 12px; margin: 3px 6px 0 0; border: 1px solid #a0a0a0;
  color: #000; font: 12px/10px "Liberation Mono", monospace; text-align: center; vertical-align: top; background: #fff;
}
.ptable .cur td.idx { background: linear-gradient(#fce0aa, #f7c470); color: #c2542a; }
.ptable .cur td.nm { background: #0078d7; color: #fff; }
.ptable .cur td { background: #d6e7f6; }
.chk { display: block; width: 13px; height: 13px; margin: 2px 0 0 10px; background: #fff; border: 1px solid #707070; }
.mark { position: absolute; left: 452px; top: 37px; width: 34px; height: 90px; }
.tabs { height: 27px; flex: none; display: flex; gap: 10px; padding: 6px 0 0 4px; background: #efefef; }
.preview { width: 544px; height: 194px; display: block; flex: none; background: #000; shape-rendering: crispEdges; }
.pv text { fill: #0f0; font: 20px "Liberation Mono", monospace; shape-rendering: auto; }
.pv .pvw { fill: #ddd; font: 18px "Noto Sans CJK SC", sans-serif; }
.pv .pvc { fill: #00b0c8; font: 19px "Noto Sans CJK SC", sans-serif; }
.pv .pvm { fill: #ddd; font: 18px "Liberation Mono", monospace; }

/* Parametric figure dialog */
.dlg {
  position: absolute; left: 694px; top: 123px; width: 508px; height: 583px;
  background: #f0f0f0; border: 1px solid #1a7fd0;
  box-shadow: 0 0 14px rgba(0, 0, 0, .35);
  display: flex; flex-direction: column;
}
.dlgtitle {
  height: 25px; flex: none; background: #fff; display: flex; align-items: center;
  justify-content: space-between; padding: 0 10px 0 3px;
}
.dlgx { width: 10px; height: 10px; }
.dlgbody { flex: 1; padding: 15px 16px 0 9px; }
.group-box { height: 498px; border: 1px solid #dcdcdc; padding: 0 4px; }
.legend { width: max-content; height: 16px; line-height: 16px; margin: -9px 0 0 2px; background: #f0f0f0; padding-right: 2px; }
.tiles { display: grid; grid-template-columns: repeat(3, 155px); grid-auto-rows: 158px; gap: 4px 3px; margin-top: 3px; }
.tile {
  padding: 8px 6px 7px 6px;
  border-style: solid; border-width: 1px 2px 2px 1px; border-color: #fff #a8a8a8 #a8a8a8 #fff;
  background: #f0f0f0;
}
.tile.sel { background: #0ff; }
.pic { width: 140px; height: 140px; display: block; background: #008080; shape-rendering: crispEdges; }
.cap { fill: #fff; font: 12px "Noto Sans CJK SC", sans-serif; shape-rendering: auto; }
.capm { font: 10px "Liberation Mono", monospace; }
.dlgfoot { display: flex; justify-content: flex-end; gap: 16px; margin-top: 12px; margin-right: -2px; }
.dbtn {
  width: 72px; height: 23px; padding: 0; background: #e1e1e1; border: 1px solid #adadad;
  font: inherit; line-height: 19px;
}
.dbtn.primary { width: 71px; border: 2px solid #0078d7; }
```
